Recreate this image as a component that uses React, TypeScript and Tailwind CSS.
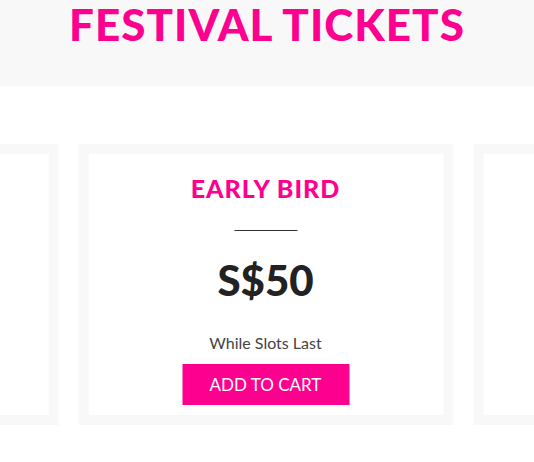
export default function App() {
  const font = { fontFamily: 'Lato, "Open Sans", sans-serif' };
  return (
    <div className="w-[534px] h-[462px] overflow-hidden bg-white" style={font}>
      <header className="h-[86px] bg-[#f8f8f8] flex justify-center">
        <h1 className="text-[44px] leading-none font-black text-[#fd0090] tracking-[1px] pt-[2px]">
          FESTIVAL TICKETS
        </h1>
      </header>

      <section className="mt-[58px] flex justify-center gap-[20px] -translate-x-[1.5px]">
        <div className="w-[375px] h-[281px] shrink-0 border-[10px] border-[#f8f8f8]" />
        <div className="w-[375px] h-[281px] shrink-0 border-[10px] border-[#f8f8f8] flex flex-col items-center">
          <h2 className="mt-[22px] text-[25px] leading-none font-black text-[#fd0090] tracking-[1px]">EARLY BIRD</h2>
          <div className="mt-[29px] w-[63px] h-px bg-[#333]" />
          <div className="mt-[28px] text-[42px] leading-none font-black text-[#222]">S$50</div>
          <p className="mt-[34px] text-[16px] leading-none text-[#444]">While Slots Last</p>
          <button className="mt-[13px] w-[167px] h-[41px] bg-[#fd0090] text-white text-[17px]">
            ADD TO CART
          </button>
        </div>
        <div className="w-[375px] h-[281px] shrink-0 border-[10px] border-[#f8f8f8]" />
      </section>
    </div>
  );
}
